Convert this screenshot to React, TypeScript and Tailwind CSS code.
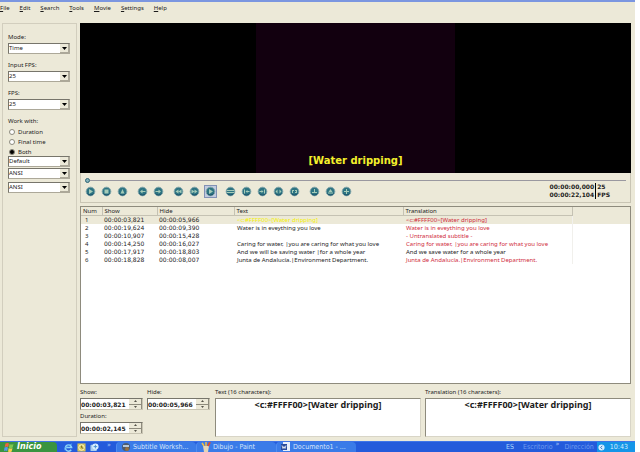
import { useState } from 'react';
import type { ReactNode } from 'react';

const MENUS = ['File', 'Edit', 'Search', 'Tools', 'Movie', 'Settings', 'Help'];

const SUBTITLES = [
  { show: '00:00:03,821', hide: '00:00:05,966', text: '<c:#FFFF00>[Water dripping]', translation: '<c:#FFFF00>[Water dripping]', done: false },
  { show: '00:00:19,624', hide: '00:00:09,390', text: 'Water is in eveything you love', translation: 'Water is in eveything you love', done: false },
  { show: '00:00:10,907', hide: '00:00:15,428', text: '', translation: '- Untranslated subtitle -', done: false },
  { show: '00:00:14,250', hide: '00:00:16,027', text: 'Caring for water, |you are caring for what you love', translation: 'Caring for water, |you are caring for what you love', done: false },
  { show: '00:00:17,917', hide: '00:00:18,803', text: 'And we will be saving water |for a whole year', translation: 'And we save water for a whole year', done: true },
  { show: '00:00:18,828', hide: '00:00:08,007', text: 'Junta de Andalucía.|Environment Department.', translation: 'Junta de Andalucía.|Environment Department.', done: false }
];

const BUTTON_GROUPS = [
  [
    { label: 'Play', d: 'M4 3l4 2.500-4 2.500z' },
    { label: 'Stop', d: 'M3.500 3.500h4v4h-4z' },
    { label: 'Toggle subtitles', d: 'M5.500 3l2 4.500h-4z' }
  ],
  [
    { label: 'Previous subtitle', d: 'M3 5.500l2.500-2v1.500h3v1h-3v1.500z' },
    { label: 'Next subtitle', d: 'M8 5.500l-2.500-2v1.500h-3v1h3v1.500z' }
  ],
  [
    { label: 'Rewind', d: 'M5.500 3.500v4l-3-2zM8.500 3.500v4l-3-2z' },
    { label: 'Forward', d: 'M2.500 3.500v4l3-2zM5.500 3.500v4l3-2z' },
    { label: 'Playback rate', d: 'M4 3l4 2.500-4 2.500z', pressed: true }
  ],
  [
    { label: 'Move subtitle', d: 'M2 4h7v1h-7zM2 6h7v1h-7z' },
    { label: 'Set start time', d: 'M3 3.500h1v4h-1zM4.500 5.500l2-1.500v1h2v1h-2v1z' },
    { label: 'Set final time', d: 'M7 3.500h1v4h-1zM6.500 5.500l-2-1.500v1h-2v1h2v1z' },
    { label: 'Start subtitle', d: 'M4.500 3.500v4l-2-2zM6.500 3.500v4l2-2z' },
    { label: 'End subtitle', d: 'M3 4h2v1h-1v2h-1zM6 4h2v3h-2v-1h1v-1h-1z' }
  ],
  [
    { label: 'First sync point', d: 'M5 3h1v3h2v1h-5v-1h2z' },
    { label: 'Last sync point', d: 'M5.500 3l2 3h-4zM3 6.500h5v1h-5z' },
    { label: 'Add sync point', d: 'M5 3h1v2h2v1h-2v2h-1v-2h-2v-1h2z' }
  ]
];

function Dropdown({ label, options }: { label: string; options: string[] }) {
  return (
    <div className="relative h-[11px] border border-[#aca899] border-t-[#77756b] border-l-[#77756b] bg-white">
      <select aria-label={label} className="block h-full w-full appearance-none bg-transparent leading-[9px] outline-none">
        {options.map((option) => (
          <option key={option}>{option}</option>
        ))}
      </select>
      <span className="pointer-events-none absolute inset-y-0 right-0 flex w-[9px] items-center justify-center border-r border-b border-[#aca899] bg-[#ece9d8]">
        <svg viewBox="0 0 5 3" className="h-[3px] w-[5px]">
          <path d="M0 0h5L2.500 3z" fill="#000" />
        </svg>
      </span>
    </div>
  );
}

function Field({ label, options }: { label: string; options: string[] }) {
  return (
    <div className="mb-[7px]">
      <div className="h-[10px]">{label}:</div>
      <Dropdown label={label} options={options} />
    </div>
  );
}

function Sidebar() {
  const [mode, setMode] = useState('Both');

  return (
    <aside className="w-[75px] shrink-0 border border-[#d2cebe] pt-[9px] pr-[6px] pl-[5px]">
      <Field label="Mode" options={['Time', 'Frames']} />
      <Field label="Input FPS" options={['25', '23.976', '29.97']} />
      <Field label="FPS" options={['25', '23.976', '29.97']} />
      <fieldset>
        <legend className="h-[10px]">Work with:</legend>
        {['Duration', 'Final time', 'Both'].map((item) => (
          <label key={item} className="flex h-[10px] items-center gap-[3px] pl-px">
            <input
              type="radio"
              name="work"
              checked={mode === item}
              onChange={() => setMode(item)}
              className="size-[6px] appearance-none rounded-full border border-[#8c8a7e] bg-white checked:bg-black"
            />
            {item}
          </label>
        ))}
      </fieldset>
      <div className="-mt-px flex flex-col gap-px">
        <Dropdown label="Style" options={['Default']} />
        <Dropdown label="Original charset" options={['ANSI']} />
      </div>
      <div className="mt-[3px]">
        <Dropdown label="Translation charset" options={['ANSI']} />
      </div>
    </aside>
  );
}

function PlayerControls() {
  return (
    <div className="h-[30px] border border-t-0 border-[#c9c5b4] px-1 pt-[5px]">
      <div className="flex items-center">
        <span className="size-[5px] rounded-full border border-[#2c6475] bg-[#84b1b9]" />
        <span className="h-px flex-1 bg-[#9a98a0]" />
      </div>
      <div className="flex items-center justify-between pr-4">
        <div className="flex gap-[9px]">
          {BUTTON_GROUPS.map((group, index) => (
            <div key={index} className="flex gap-[5px]">
              {group.map((button) => (
                <button
                  key={button.label}
                  type="button"
                  aria-label={button.label}
                  className={'pressed' in button ? 'bg-[#c1cbe0] outline outline-[#8291b5]' : ''}
                >
                  <svg viewBox="0 0 11 11" className="size-[11px]">
                    <circle cx="5.500" cy="5.500" r="4.300" fill="#2d7482" stroke="#7fa3a8" strokeWidth="1" />
                    <path d="M2.500 7.500a3.600 3.600 0 0 0 6 0" fill="none" stroke="#174e68" strokeWidth="1" />
                    <path d={button.d} fill="#a5cbb8" />
                  </svg>
                </button>
              ))}
            </div>
          ))}
        </div>
        <div className="flex font-['DejaVu_Sans',sans-serif] leading-[8px] font-bold">
          <div className="border-r border-black pr-px">
            <div>00:00:00,000</div>
            <div>00:00:22,104</div>
          </div>
          <div className="pl-px">
            <div>25</div>
            <div>FPS</div>
          </div>
        </div>
      </div>
    </div>
  );
}

function SubtitleTable() {
  return (
    <div className="mt-[3px] min-h-0 flex-1 overflow-hidden border border-[#8e8b7d] bg-white">
      <table className="w-full table-fixed border-collapse text-left leading-[8px] whitespace-nowrap">
        <colgroup>
          <col className="w-[21px]" />
          <col className="w-[55px]" />
          <col className="w-[77px]" />
          <col className="w-[169px]" />
          <col className="w-[169px]" />
          <col />
        </colgroup>
        <thead>
          <tr className="h-[8px] bg-[#ece9d8]">
            {['Num', 'Show', 'Hide', 'Text', 'Translation'].map((name) => (
              <th key={name} className="border-r border-b border-[#c5c2b3] p-0 pl-[2px] font-normal">
                {name}
              </th>
            ))}
            <td className="p-0" />
          </tr>
        </thead>
        <tbody>
          {SUBTITLES.map((row, index) => (
            <tr key={row.show} className={index === 0 ? 'h-[8px] bg-[#ece9d8]' : 'h-[8px]'}>
              <td className="p-0 pl-1">{index + 1}</td>
              <td className="p-0 pl-[2px] font-['DejaVu_Sans',sans-serif]">{row.show}</td>
              <td className="p-0 pl-[2px] font-['DejaVu_Sans',sans-serif]">{row.hide}</td>
              <td className={index === 0 ? 'p-0 pl-[3px] text-[#f5f000]' : 'p-0 pl-[3px]'}>{row.text}</td>
              <td className={row.done ? 'p-0 pl-[3px]' : 'p-0 pl-[3px] text-[#d02c3c]'}>{row.translation}</td>
              <td className="border-l border-[#f1f0ec] p-0" />
            </tr>
          ))}
        </tbody>
      </table>
    </div>
  );
}

function TimeField({ label, value }: { label: string; value: string }) {
  return (
    <label className="block w-[63px]">
      <span className="block h-[10px]">{label}:</span>
      <span className="flex h-[12px] border border-[#c9c5b4] border-t-[#77756b] border-l-[#77756b] bg-white">
        <input defaultValue={value} className="w-0 flex-1 font-['DejaVu_Sans',sans-serif] font-bold outline-none" />
        <span className="flex w-[13px] flex-col bg-[#ece9d8]">
          <span className="flex flex-1 items-center justify-center border-r border-b border-[#8e8b7d]">
            <svg viewBox="0 0 3 2" className="h-[2px] w-[3px]"><path d="M0 2h3L1.500 0z" fill="#55534a" /></svg>
          </span>
          <span className="flex flex-1 items-center justify-center border-r border-[#8e8b7d]">
            <svg viewBox="0 0 3 2" className="h-[2px] w-[3px]"><path d="M0 0h3L1.500 2z" fill="#55534a" /></svg>
          </span>
        </span>
      </span>
    </label>
  );
}

function TextField({ label }: { label: string }) {
  return (
    <label className="flex flex-1 flex-col">
      <span className="h-[10px]">{label} (16 characters):</span>
      <textarea
        defaultValue="<c:#FFFF00>[Water dripping]"
        className="block h-[39px] w-full resize-none border border-[#d8d5c7] border-t-[#8e8b7d] border-l-[#8e8b7d] bg-white pt-px text-center text-[9px] leading-[10px] font-bold outline-none"
      />
    </label>
  );
}

function TaskButton({ title, icon }: { title: string; icon: ReactNode }) {
  return (
    <button type="button" className="flex h-full w-[80px] items-center gap-[2px] rounded-t-sm border-l border-[#4f8cf0] bg-[#3a7be8] pl-1 text-[#d5e4fb]">
      <svg viewBox="0 0 10 10" className="size-[10px] shrink-0">{icon}</svg>
      {title}
    </button>
  );
}

function Taskbar() {
  return (
    <footer className="flex h-[11px] items-end overflow-hidden border-t border-[#3f75e8] bg-[#245bdb] font-['DejaVu_Sans_Condensed','DejaVu_Sans',sans-serif] text-[7px] leading-[10px]">
      <button type="button" className="flex h-full w-[57px] items-center gap-[3px] rounded-tr bg-[#3a9440] pl-1 text-white">
        <svg viewBox="0 0 10 10" className="size-[10px] shrink-0">
          <path d="M1.500 1.500q2-1.200 3.500 0l-.8 3.500q-1.800-1-3.500 0z" fill="#ee6540" />
          <path d="M5.500 2q2 1 4 0l-.8 3.400q-1.800 1-3.800 0z" fill="#7fc84d" />
          <path d="M.5 5.600q1.800-1 3.500 0l-.8 3.500q-1.600-1-3.200 0z" fill="#5897ee" />
          <path d="M4.700 6q1.800 1 3.800 0l-.8 3.400q-1.800 1-3.700 0z" fill="#f9d24a" />
        </svg>
        <span className="font-['DejaVu_Sans',sans-serif] text-[8px] leading-[10px] font-bold italic">Inicio</span>
      </button>
      <div className="ml-[7px] flex w-[52px] items-center gap-1">
        <svg viewBox="0 0 10 10" className="size-[9px]">
          <path d="M8 7.500A3.500 3.500 0 1 1 8.500 5h-6" fill="none" stroke="#8dd2fa" strokeWidth="1.600" />
          <path d="M1 8Q0 4 9 1" fill="none" stroke="#5cb0ed" />
        </svg>
        <svg viewBox="0 0 10 10" className="size-[9px]">
          <rect x=".5" y=".5" width="9" height="9" fill="#d4c45a" />
          <circle cx="5" cy="5" r="3" fill="none" stroke="#fff9cf" />
          <path d="M5 3v2l2 1" fill="none" stroke="#756923" />
        </svg>
        <svg viewBox="0 0 10 10" className="size-[9px]">
          <rect x=".5" y="2" width="7" height="7" rx="1" fill="#a8cdec" />
          <circle cx="6" cy="4" r="3.500" fill="#d9efff" />
          <path d="M4 4h4M6 2v4" stroke="#438bcc" />
        </svg>
        <span className="ml-1 self-start leading-[5px] text-[#a9c6f8]">»</span>
      </div>
      <TaskButton
        title="Subtitle Worksh..."
        icon={<><circle cx="5" cy="5" r="4" fill="#4c5b70" /><path d="M2 3h6v2h-6z" fill="#b7c8d8" /><circle cx="6" cy="7" r="2" fill="#98703f" /></>}
      />
      <TaskButton
        title="Dibujo - Paint"
        icon={<><path d="M2 4h6l-1 6h-4z" fill="#e4d4b5" /><path d="M3 4L1 1M5 4V0" stroke="#f1c046" strokeWidth="1.500" /><path d="M7 4l2-4" stroke="#db5031" strokeWidth="2" /></>}
      />
      <TaskButton
        title="Documento1 - ..."
        icon={<><path d="M2 0h7v9h-7z" fill="#e8effb" /><path d="M0 2h6v6h-6z" fill="#294b9c" /><path d="M1 3.500l1 3 1-2 1 2 1-3" fill="none" stroke="#fff" strokeWidth=".8" /></>}
      />
      <div className="flex-1" />
      <span className="mr-[9px] text-[#a9dafc]">ES</span>
      <span className="mr-[3px] text-[#6f9cf0]">Escritorio</span>
      <span className="mr-[5px] self-start leading-[5px] text-[#a9c6f8]">»</span>
      <span className="mr-[3px] text-[#6f9cf0]">Dirección</span>
      <div className="flex h-full items-center gap-[5px] bg-[#1595e8] pr-[7px] pl-px text-[#d5eefd]">
        <svg viewBox="0 0 8 8" className="size-[7px]">
          <circle cx="4" cy="4" r="3.500" fill="#d8efff" />
          <path d="M5 2L3 4l2 2" fill="none" stroke="#2862b5" />
        </svg>
        10:43
      </div>
    </footer>
  );
}

export default function App() {
  return (
    <div className="h-screen bg-white pr-[5px]">
      <div className="flex h-full flex-col bg-[#ece9d8] font-['Noto_Sans',sans-serif] text-[6px] leading-[9px] text-[#1c1c1c]">
        <div className="h-[2px] bg-[#7b96e0]" />
        <nav className="flex h-[21px] gap-[10px] pt-px">
          {MENUS.map((menu) => (
            <button key={menu} type="button" className="h-[10px]">
              <span className="underline">{menu[0]}</span>
              {menu.slice(1)}
            </button>
          ))}
        </nav>

        <div className="flex min-h-0 flex-1 gap-[3px] pr-1 pb-1 pl-[2px]">
          <Sidebar />
          <main className="flex min-w-0 flex-1 flex-col">
            {/* Video preview */}
            <div className="flex h-[150px] justify-center bg-black">
              <div className="flex w-[36%] items-end justify-center bg-[#12000f] pb-[5px]">
                <span className="font-['DejaVu_Sans',sans-serif] text-[10px] leading-[14px] font-bold whitespace-nowrap text-[#f4f02b]">
                  [Water dripping]
                </span>
              </div>
            </div>
            <PlayerControls />
            <SubtitleTable />

            {/* Subtitle editor */}
            <div className="mt-1 flex">
              <div className="mr-[5px] grid grid-cols-2 content-start gap-x-1 gap-y-[2px]">
                <TimeField label="Show" value="00:00:03,821" />
                <TimeField label="Hide" value="00:00:05,966" />
                <TimeField label="Duration" value="00:00:02,145" />
              </div>
              <div className="flex flex-1 gap-1">
                <TextField label="Text" />
                <TextField label="Translation" />
              </div>
            </div>
          </main>
        </div>

        <Taskbar />
      </div>
    </div>
  );
}
